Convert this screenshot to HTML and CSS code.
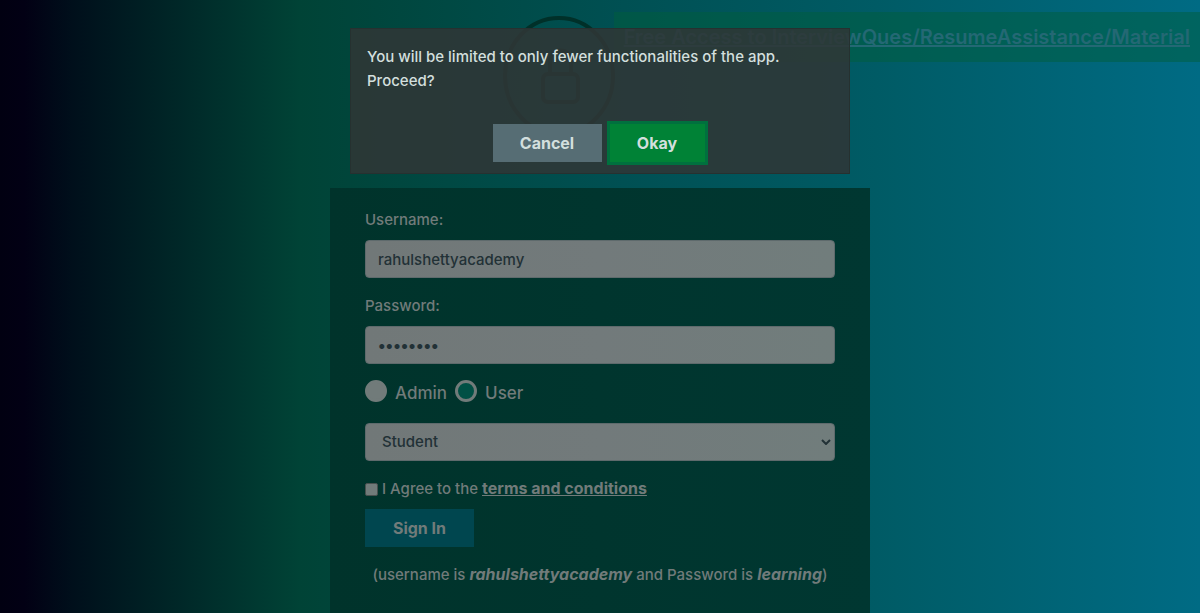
FILE: index.html
```
<!DOCTYPE html>
<html lang="en">
<head>
<meta charset="utf-8">
<meta name="viewport" content="width=device-width, initial-scale=1">
<title>Login</title>
<link rel="stylesheet" href="styles.css">
</head>
<body>
<a class="banner" href="#">Free Access to InterviewQues/ResumeAssistance/Material</a>
<main class="page">
  <svg class="logo" viewBox="0 0 112 120" fill="none" stroke="#003029" stroke-width="4" aria-hidden="true">
    <ellipse cx="56" cy="60" rx="54" ry="58"/>
    <rect x="40" y="58" width="35" height="28" rx="5"/>
    <path d="M47 58V45C47 31 68 31 68 45V58"/>
  </svg>
  <form class="card">
    <label class="label" for="username">Username:</label>
    <input class="field" id="username" type="text" value="rahulshettyacademy">
    <label class="label" for="password">Password:</label>
    <input class="field password" id="password" type="password" value="learning">
    <div class="roles">
      <label class="role"><input class="radio" type="radio" name="role" checked>Admin</label>
      <label class="role"><input class="radio" type="radio" name="role">User</label>
    </div>
    <select class="field select" aria-label="Role">
      <option>Student</option>
      <option>Teacher</option>
      <option>Consultant</option>
    </select>
    <div class="terms">
      <input class="check" id="terms" type="checkbox">
      <label for="terms">I Agree to the <a class="terms-link" href="#">terms and conditions</a></label>
    </div>
    <button class="button signin" type="button">Sign In</button>
    <p class="hint">(username is <b><i>rahulshettyacademy</i></b> and Password is <b><i>learning</i></b>)</p>
  </form>
</main>
<div class="modal" role="dialog" aria-labelledby="message">
  <p class="message" id="message">You will be limited to only fewer functionalities of the app. Proceed?</p>
  <div class="actions">
    <button class="button cancel" type="button">Cancel</button>
    <button class="button okay" type="button">Okay</button>
  </div>
</div>
</body>
</html>
```
FILE: styles.css
```
* { box-sizing: border-box; }

body {
  margin: 0;
  min-height: 100vh;
  font: 500 15px/24px Inter, "Liberation Sans", sans-serif;
  color: #717b7a;
  background: linear-gradient(90deg, #010011 0%, #020014 2%, #000f1b 6%, #004336 25%, #005053 52%, #005b65 73%, #006b84 100%);
}

.banner {
  position: absolute;
  top: 12px;
  right: 0;
  padding: 10px;
  font-size: 20px;
  line-height: 30px;
  font-weight: 600;
  color: #246874;
  background: rgba(0, 93, 60, 0.5);
}

.page {
  display: flex;
  flex-direction: column;
  align-items: center;
  min-height: 100vh;
  padding-top: 16px;
}

.logo {
  width: 112px;
  height: 120px;
  margin: 0 82px 52px 0;
}

.card {
  flex: 1;
  width: 100%;
  max-width: 540px;
  padding: 20px 35px;
  background: linear-gradient(90deg, #00332b, #003731);
}

.label {
  display: block;
  margin-bottom: 8px;
}

.field {
  display: block;
  width: 100%;
  height: 38px;
  margin-bottom: 16px;
  padding: 6px 12px;
  border: 1px solid #5e6a6c;
  border-radius: 4px;
  font: inherit;
  color: #223136;
  background: linear-gradient(90deg, #717878, #727a7b 50%, #717d7c);
}

.password {
  font-size: 16px;
  font-weight: 700;
}

.roles {
  display: flex;
  gap: 8px;
  margin-bottom: 16px;
  font-size: 17px;
  line-height: 27px;
}

.role {
  display: flex;
  gap: 8px;
}

.radio {
  appearance: none;
  width: 22px;
  height: 22px;
  margin: 0;
  border: 3px solid #717b7a;
  border-radius: 50%;
  background: #005045;
}

.radio:checked { background: #717b7a; }

.select {
  appearance: none;
  padding-left: 16px;
  background:
    url("data:image/svg+xml,%3Csvg xmlns='http://www.w3.org/2000/svg' width='10' height='6' viewBox='0 0 10 6'%3E%3Cpath d='M1 1l4 4 4-4' fill='none' stroke='%23223136' stroke-width='2'/%3E%3C/svg%3E") no-repeat right 3px center,
    linear-gradient(90deg, #717878, #727a7b 50%, #717d7c);
}

.terms {
  display: flex;
  align-items: center;
  gap: 4px;
  margin-bottom: 8px;
}

.check {
  appearance: none;
  width: 13px;
  height: 13px;
  margin: 0;
  border: 1px solid #48504f;
  border-radius: 2px;
  background: #717b7a;
}

.terms-link {
  color: inherit;
  font-size: 16px;
  line-height: 20px;
  font-weight: 700;
}

.button {
  width: 109px;
  height: 38px;
  padding: 0;
  border: 0;
  font: inherit;
  font-size: 16px;
  font-weight: 700;
  color: #d2dfdd;
}

.signin {
  display: block;
  color: #717b7a;
  background: #00464f;
}

.hint {
  margin: 16px 0 0;
  text-align: center;
}

.hint b {
  font-size: 16px;
  line-height: 20px;
}

.modal {
  position: absolute;
  top: 28px;
  left: 50%;
  transform: translateX(-50%);
  width: 500px;
  max-width: 100%;
  padding: 16px 16px 8px;
  border: 1px solid #263130;
  background: rgba(47, 54, 54, 0.87);
}

.message {
  margin: 0 0 28px;
  color: #d2dfdd;
}

.actions {
  display: flex;
  justify-content: center;
  align-items: center;
  gap: 5px;
}

.cancel { background: #566d74; }

.okay {
  width: 101px;
  height: 44px;
  border: 3px solid #00703e;
  background: #008236;
}
```
